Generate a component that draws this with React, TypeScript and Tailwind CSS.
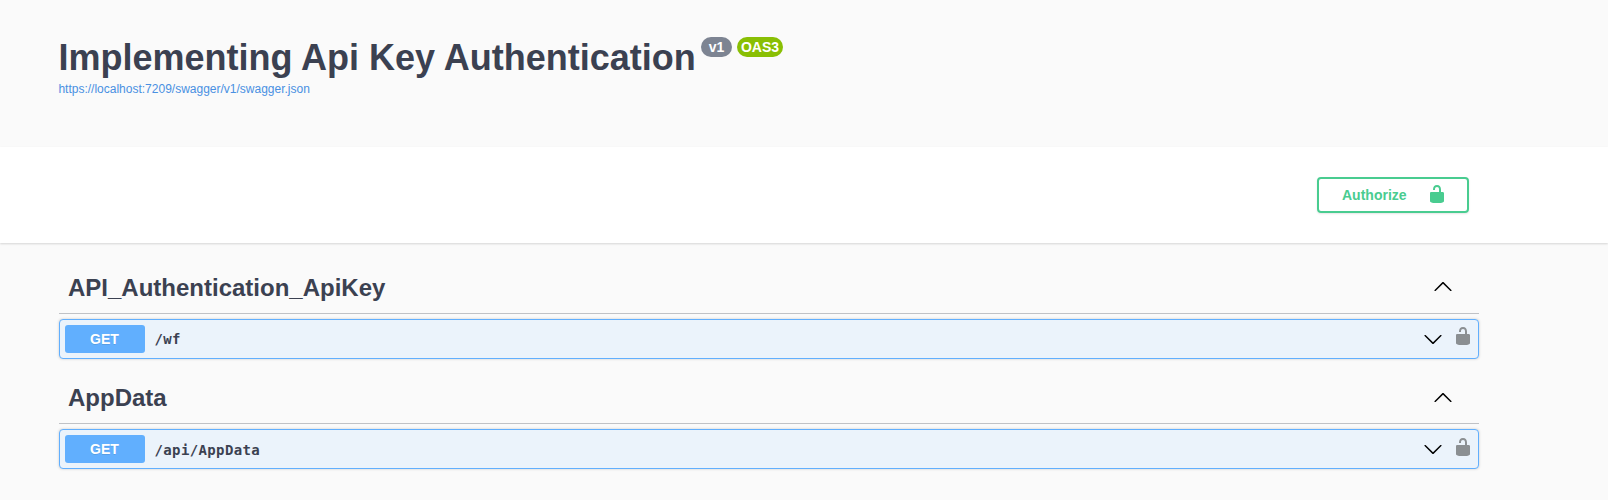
import React from "react";

const UNLOCKED =
  "M15.8 8H14V5.6C14 2.703 12.665 1 10 1 7.334 1 6 2.703 6 5.6V6h2v-.801C8 3.754 8.797 3 10 3c1.203 0 2 .754 2 2.199V8H4c-.553 0-1 .646-1 1.199V17c0 .549.428 1.139.951 1.307l1.197.387C5.672 18.861 6.55 19 7.1 19h5.8c.549 0 1.428-.139 1.951-.307l1.196-.387c.524-.167.953-.757.953-1.306V9.199C17 8.646 16.352 8 15.8 8z";
const ARROW_UP =
  "M17.418 14.908c.272.268.709.268.979 0s.271-.701 0-.969l-7.908-7.83c-.27-.268-.707-.268-.979 0l-7.908 7.83c-.27.268-.27.701 0 .969s.709.268.979 0L10 7.767l7.418 7.141z";
const ARROW_DOWN =
  "M17.418 6.109c.272-.268.709-.268.979 0s.271.701 0 .969l-7.908 7.83c-.27.268-.707.268-.979 0l-7.908-7.83c-.27-.268-.27-.701 0-.969s.709-.268.979 0L10 13.25l7.418-7.141z";

function Icon({ path, className = "" }: { path: string; className?: string }) {
  return (
    <svg viewBox="0 0 20 20" className={`size-5 shrink-0 fill-current ${className}`} aria-hidden="true">
      <path d={path} />
    </svg>
  );
}

type TagProps = {
  name: string;
  path: string;
  arrowClass: string;
  pathClass: string;
  lockClass: string;
};

function TagSection({ name, path, arrowClass, pathClass, lockClass }: TagProps) {
  return (
    <section className="h-[110px]">
      <div className="flex h-[51px] items-start justify-between border-b border-[rgba(59,65,81,0.3)] pl-[9px] pr-[26px]">
        <h3 className="text-2xl leading-[50px] font-bold">{name}</h3>
        <Icon path={ARROW_UP} className={`text-black ${arrowClass}`} />
      </div>
      <div className="mt-[5px] flex h-10 items-start rounded border border-[#61affe] bg-[#ebf3fb] p-[5px] shadow-[0_0_3px_rgba(0,0,0,0.19)]">
        <button className="h-7 w-20 rounded-[3px] bg-[#61affe] pr-px text-sm leading-7 font-bold text-white [text-shadow:0_1px_0_rgba(0,0,0,0.1)]">
          GET
        </button>
        <span
          className={`ml-[9.5px] flex-1 font-['DejaVu_Sans_Mono',monospace] text-sm leading-7 font-bold tracking-[0.37px] ${pathClass}`}
        >
          {path}
        </span>
        <Icon path={ARROW_DOWN} className="mt-1 mr-2.5 text-black" />
        <Icon path={UNLOCKED} className={`text-[#8b8f92] ${lockClass}`} />
      </div>
    </section>
  );
}

export default function App() {
  return (
    <div className="h-[500px] overflow-hidden bg-[#fafafa] font-['Liberation_Sans',Arial,sans-serif] text-[#3b4151]">
      <header className="h-[147px] pt-9 pl-[58.4px]">
        <div className="flex items-start">
          <h1 className="w-[637.6px] text-4xl leading-[44px] font-bold whitespace-nowrap">
            Implementing Api Key Authentication
          </h1>
          <span className="mt-px ml-[5px] h-5 w-[31px] rounded-full bg-[#7d8492] text-center text-sm leading-5 font-bold text-white">
            v1
          </span>
          <span className="mt-px ml-[5px] h-5 w-[46px] rounded-full bg-[#89bf04] text-center text-sm leading-5 font-bold text-white">
            OAS3
          </span>
        </div>
        <a className="block w-fit text-xs leading-[18px] text-[#4990e2]">https://localhost:7209/swagger/v1/swagger.json</a>
      </header>

      <div className="flex h-24 justify-end bg-white pt-[30px] pr-[139px] shadow-[0_1px_2px_0_rgba(0,0,0,0.15)]">
        <button className="flex h-9 w-[152px] items-start rounded border-2 border-[#49cc90] pl-[23px] text-[#49cc90] shadow-[0_1px_2px_rgba(0,0,0,0.1)]">
          <span className="w-[85px] text-left text-sm leading-8 font-bold">Authorize</span>
          <Icon path={UNLOCKED} className="mt-[5px]" />
        </button>
      </div>

      <main className="ml-[59px] w-[1420px] pt-5">
        <TagSection
          name="API_Authentication_ApiKey"
          path="/wf"
          arrowClass="mt-[13px]"
          pathClass=""
          lockClass="mt-px"
        />
        <TagSection
          name="AppData"
          path="/api/AppData"
          arrowClass="mt-3.5"
          pathClass="pt-px"
          lockClass="mt-0.5"
        />
      </main>
    </div>
  );
}
